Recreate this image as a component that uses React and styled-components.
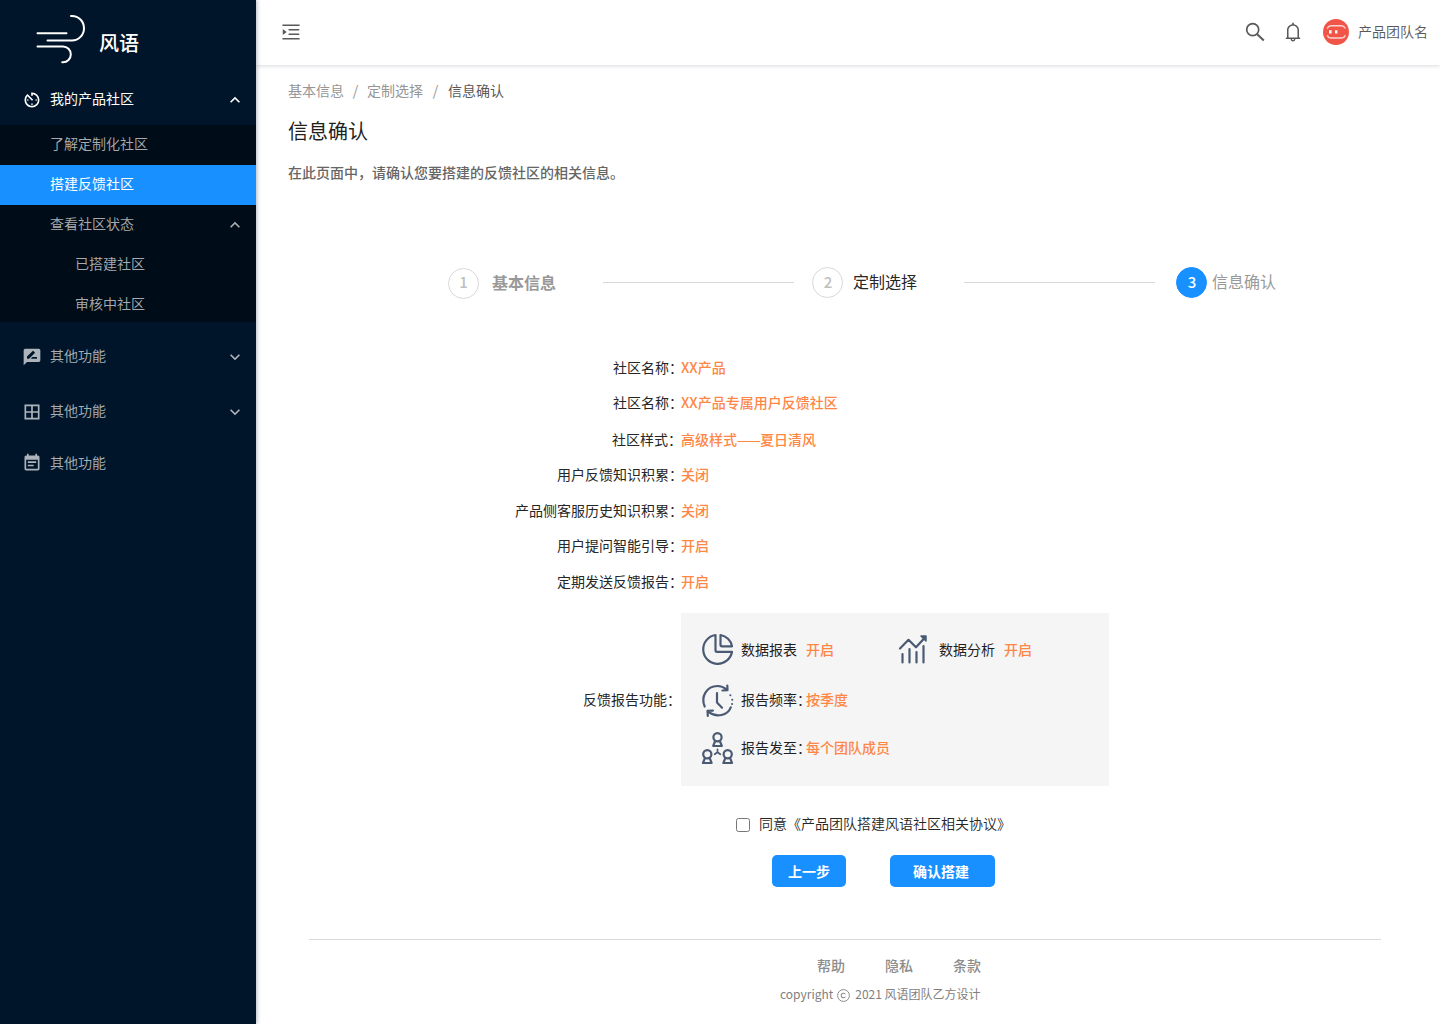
import React from "react";
import styled, { createGlobalStyle } from "styled-components";
import { MdAvTimer, MdRateReview, MdBorderAll, MdEventNote, MdExpandLess, MdExpandMore } from "react-icons/md";
import { AiOutlineMenuUnfold, AiOutlineBell } from "react-icons/ai";

const Global = createGlobalStyle`
  * { box-sizing: border-box; }
  body { margin: 0; background: #fff; font-family: "Noto Sans CJK SC", "Noto Sans", sans-serif; font-size: 14px; line-height: 20px; }
`;

const Page = styled.div`
  display: flex;
  width: 1440px;
  height: 1024px;
  overflow: hidden;
`;

const Sidebar = styled.aside`
  width: 256px;
  flex: none;
  background: #001529;
  box-shadow: 1px 0 4px rgba(0, 21, 41, 0.3);
  z-index: 1;
`;

const Brand = styled.div`
  display: flex;
  height: 75px;
  padding: 14px 0 0 36px;
  color: #fff;
`;

const BrandName = styled.h1`
  margin: 14px 0 0 11px;
  font-size: 20px;
  line-height: 30px;
  font-weight: 500;
`;

const MenuItem = styled.div`
  display: flex;
  align-items: center;
  height: ${(p) => p.$height || 40}px;
  padding: 0 11px 0 ${(p) => p.$indent || 22}px;
  color: ${(p) => (p.$active ? "#fff" : "rgba(255, 255, 255, 0.68)")};
  background: ${(p) => (p.$selected ? "#1890ff" : "transparent")};
  font-weight: ${(p) => (p.$active ? 400 : 350)};
  white-space: nowrap;
  > svg { flex: none; }
  > svg:first-child { margin-right: 8px; }
  > svg:last-child { margin-left: auto; }
`;

const MenuText = styled.span`
  margin-bottom: ${(p) => p.$lift || 4}px;
`;

const SubMenu = styled.div`
  height: 197px;
  overflow: hidden;
  background: #000c17;
`;

const Main = styled.main`
  flex: 1;
  display: flex;
  flex-direction: column;
`;

const TopBar = styled.header`
  display: flex;
  align-items: center;
  flex: none;
  height: 65px;
  padding: 0 12px 1px 24px;
  color: #595959;
  box-shadow: 0 1px 4px rgba(0, 21, 41, 0.16);
`;

const Tools = styled.div`
  display: flex;
  align-items: center;
  margin-left: auto;
`;

const Bell = styled(AiOutlineBell)`
  margin: 0 19px 0 16px;
`;

const UserName = styled.span`
  margin: 0 0 3px 9px;
  font-weight: 350;
`;

const Intro = styled.section`
  padding: 15px 32px 0;
  height: 202px;
`;

const Crumbs = styled.nav`
  display: flex;
  color: #969696;
`;

const Slash = styled.span`
  width: ${(p) => p.$width}px;
  text-align: center;
`;

const Current = styled.span`
  color: #595959;
`;

const Title = styled.h2`
  margin: 17px 0 0;
  font-size: 20px;
  line-height: 28px;
  font-weight: 400;
  color: #1f1f1f;
`;

const Description = styled.p`
  margin: 17px 0 0;
  color: #666;
  font-weight: 500;
`;

const Steps = styled.div`
  display: flex;
  align-items: center;
  height: 31px;
  padding-left: 192px;
`;

const StepCircle = styled.span`
  display: flex;
  align-items: center;
  justify-content: center;
  width: 31px;
  height: 31px;
  margin: ${(p) => p.$drop || 0}px ${(p) => p.$gap}px ${(p) => -(p.$drop || 0)}px 0;
  padding: 0 0 ${(p) => (p.$drop ? 4 : 1)}px ${(p) => (p.$drop ? 0 : 1)}px;
  border-radius: 50%;
  border: 1px solid ${(p) => (p.$current ? "#1890ff" : "#d9d9d9")};
  background: ${(p) => (p.$current ? "#1890ff" : "#fff")};
  color: ${(p) => (p.$current ? "#fff" : "#bfbfbf")};
  font-size: 15px;
  font-weight: 500;
`;

const StepLabel = styled.span`
  width: ${(p) => p.$width}px;
  padding-bottom: ${(p) => (p.$bold ? 2 : 4)}px;
  font-size: 16px;
  font-weight: ${(p) => (p.$bold ? 700 : 400)};
  color: ${(p) => (p.$dark ? "#262626" : "#999")};
`;

const StepLine = styled.span`
  width: 191px;
  height: 1px;
  margin-right: ${(p) => p.$gap}px;
  background: #d9d9d9;
`;

const Details = styled.section`
  padding-top: 59px;
`;

const DetailRow = styled.div`
  display: flex;
  height: ${(p) => p.$height}px;
`;

const DetailLabel = styled.span`
  display: flex;
  justify-content: flex-end;
  width: ${(p) => p.$width}px;
  margin-right: ${(p) => 425 - p.$width}px;
  padding-bottom: ${(p) => p.$lift || 0}px;
  color: #262626;
`;

const Value = styled.span`
  font-weight: 500;
  color: #ff8746;
  white-space: nowrap;
`;

const Dash = styled.span`
  letter-spacing: -0.5px;
`;

const ReportRow = styled.div`
  display: flex;
  align-items: center;
`;

const Report = styled.div`
  display: grid;
  grid-template-columns: 198px 1fr;
  grid-template-rows: 51px 50px 46px;
  width: 428px;
  height: 173px;
  padding: 11px 0 0 20px;
  background: #f5f5f5;
`;

const Feature = styled.div`
  display: flex;
  align-items: center;
  grid-column: ${(p) => p.$column || 1};
  color: #1f1f1f;
  > span { margin-bottom: 2px; }
`;

const FeatureName = styled.span`
  width: 65px;
  margin-left: 7px;
  white-space: nowrap;
  font-feature-settings: "halt";
`;

const Agreement = styled.label`
  display: flex;
  align-items: center;
  height: 20px;
  margin: 28px 0 0 480px;
  font-weight: 350;
  color: #262626;
`;

const AgreementText = styled.span`
  margin-bottom: 2px;
`;

const Checkbox = styled.input`
  width: 14px;
  height: 14px;
  margin: 2px 9px 0 0;
`;

const Actions = styled.div`
  display: flex;
  gap: 44px;
  margin: 21px 0 0 516px;
`;

const Button = styled.button`
  width: ${(p) => p.$width}px;
  height: 32px;
  padding: 0 ${(p) => p.$inset || 0}px 0 0;
  border: 0;
  border-radius: 5px;
  background: #1890ff;
  color: #fff;
  font: inherit;
  font-weight: 700;
`;

const Footer = styled.footer`
  margin: 52px 59px 0 53px;
  border-top: 1px solid #d9d9d9;
  color: #8c8c8c;
  font-weight: 500;
`;

const Links = styled.div`
  display: flex;
  gap: 40px;
  padding: 15px 0 0 508px;
`;

const Copyright = styled.div`
  display: flex;
  align-items: center;
  margin: 9px 0 0 471px;
  font-size: 12px;
  font-weight: 400;
  color: #808080;
  white-space: nowrap;
  svg { margin: 2px 5px 0 4px; }
`;

const WindLogo = () => (
  <svg width="52" height="50" viewBox="0 0 52 50" fill="none" stroke="#fff" strokeWidth="2" strokeLinecap="round">
    <path d="M1.500 19.300H30.500M11.500 26.500H36a12 12.300 0 0 0 0-24.600h-1" />
    <path d="M1.500 32.500H27a7.800 7.900 0 0 1 0 15.800h-.8" />
  </svg>
);

const SearchIcon = () => (
  <svg width="24" height="24" viewBox="0 0 24 24" fill="none" stroke="#595959" strokeWidth="1.700">
    <circle cx="10.700" cy="9.700" r="6" />
    <path d="M15.200 14.200l6.600 6.300" strokeWidth="2" />
  </svg>
);

const Avatar = () => (
  <svg width="26" height="26" viewBox="0 0 26 26">
    <circle cx="13" cy="13" r="13" fill="#f05548" />
    <g fill="none" stroke="#fff" strokeOpacity=".75" strokeWidth="1.500" strokeLinecap="round">
      <path d="M4.500 9c.8-1.600 1.800-2.300 3.500-2.300h10.500c1.700 0 2.700.7 3.500 2.300M4.500 16.800c.8 1.600 1.800 2.300 3.500 2.300h10.500c1.700 0 2.700-.7 3.500-2.300" />
    </g>
    <path d="M6 11.200h2.600v3.200H6zM12 11.200h2.400v3.200H12z" fill="#fff" />
  </svg>
);

const Line = ({ children }) => (
  <svg width="33" height="33" viewBox="0 0 33 33" overflow="visible" fill="none" stroke="#4a5a73" strokeWidth="2.200" strokeLinecap="round" strokeLinejoin="round">
    {children}
  </svg>
);

const PieIcon = () => (
  <Line>
    <path d="M14.500 2A14.500 14.500 0 1 0 31 18.800H16a1.500 1.500 0 0 1-1.500-1.500zM19.500 2v9.800a1.500 1.500 0 0 0 1.500 1.500h10A14 14 0 0 0 19.500 2z" />
  </Line>
);

const ChartIcon = () => (
  <Line>
    <path d="M3.500 21v8.500M10.500 16v13.500M17.500 19v10.500M24.500 13v16.500M1 15.500l8.500-8.700 7.500 7.500L26 4.500" />
    <path d="M22 3h5v5z" fill="#4a5a73" strokeWidth="1.500" />
  </Line>
);

const ClockIcon = () => (
  <Line>
    <path d="M3.700 22.500C-.5 13 5.500 2 16.500 2c3.800 0 6.500 1.300 8.700 3.300M26.300 1.500l.2 4.700-5 .3M7.800 28.200C15.500 34 26.500 31.500 29.800 23.300M6.800 32l-.3-5.200 5.400-.2M16 9v9.500l5 5.200" />
    <path d="M29.300 11.300h.1M31.200 15.700h.1M31 20h.1" strokeWidth="2" />
  </Line>
);

const TeamIcon = () => (
  <Line>
    <circle cx="16.500" cy="5.300" r="4.100" />
    <path d="M14 9.300l-1.800 4.700h8.600L19 9.300" />
    <circle cx="6.300" cy="22.300" r="4.100" />
    <path d="M3.800 26.300L2 31h8.600l-1.800-4.700" />
    <circle cx="26.700" cy="22.300" r="4.100" />
    <path d="M24.200 26.300L22.400 31H31l-1.800-4.700" />
    <path d="M16.500 17.300v3l-2.800 2M16.500 20.300l2.800 2" strokeWidth="1.700" />
  </Line>
);

const CopyrightMark = () => (
  <svg width="13" height="13" viewBox="0 0 13 13" fill="none" stroke="#8c8c8c">
    <circle cx="6.500" cy="6.500" r="5.900" />
    <path d="M8.400 5.200a2.300 2.300 0 1 0 0 2.600" strokeWidth="1.100" />
  </svg>
);

const details = [
  ["社区名称：", "XX产品", 35, 427],
  ["社区名称：", "XX产品专属用户反馈社区", 37, 427],
  ["社区样式：", <>高级样式<Dash>——</Dash>夏日清风</>, 35, 426],
  ["用户反馈知识积累：", "关闭", 36, 427],
  ["产品侧客服历史知识积累：", "关闭", 35, 427],
  ["用户提问智能引导：", "开启", 36, 427],
  ["定期发送反馈报告：", "开启", 42, 427],
];

export default function App() {
  return (
    <Page>
      <Global />
      <Sidebar>
        <Brand><WindLogo /><BrandName>风语</BrandName></Brand>
        <MenuItem $active $height={50}><MdAvTimer size={20} /><MenuText>我的产品社区</MenuText><MdExpandLess size={20} /></MenuItem>
        <SubMenu>
          <MenuItem $indent={50}><MenuText>了解定制化社区</MenuText></MenuItem>
          <MenuItem $indent={50} $active $selected><MenuText>搭建反馈社区</MenuText></MenuItem>
          <MenuItem $indent={50}><MenuText>查看社区状态</MenuText><MdExpandLess size={20} /></MenuItem>
          <MenuItem $indent={75}><MenuText>已搭建社区</MenuText></MenuItem>
          <MenuItem $indent={75}><MenuText>审核中社区</MenuText></MenuItem>
        </SubMenu>
        <MenuItem $height={69}><MdRateReview size={20} /><MenuText $lift={3}>其他功能</MenuText><MdExpandMore size={20} /></MenuItem>
        <MenuItem $height={41}><MdBorderAll size={20} /><MenuText $lift={3}>其他功能</MenuText><MdExpandMore size={20} /></MenuItem>
        <MenuItem $height={62}><MdEventNote size={20} /><MenuText $lift={2}>其他功能</MenuText></MenuItem>
      </Sidebar>
      <Main>
        <TopBar>
          <AiOutlineMenuUnfold size={22} />
          <Tools>
            <SearchIcon />
            <Bell size={22} />
            <Avatar />
            <UserName>产品团队名</UserName>
          </Tools>
        </TopBar>
        <Intro>
          <Crumbs>基本信息<Slash $width={23}>/</Slash>定制选择<Slash $width={25}>/</Slash><Current>信息确认</Current></Crumbs>
          <Title>信息确认</Title>
          <Description>在此页面中，请确认您要搭建的反馈社区的相关信息。</Description>
        </Intro>
        <Steps>
          <StepCircle $gap={13} $drop={1}>1</StepCircle>
          <StepLabel $width={111} $bold>基本信息</StepLabel>
          <StepLine $gap={18} />
          <StepCircle $gap={10}>2</StepCircle>
          <StepLabel $width={111} $dark>定制选择</StepLabel>
          <StepLine $gap={21} />
          <StepCircle $gap={5} $current>3</StepCircle>
          <StepLabel $width={64}>信息确认</StepLabel>
        </Steps>
        <Details>
          {details.map(([label, value, height, width]) => (
            <DetailRow key={label + height} $height={height}>
              <DetailLabel $width={width}>{label}</DetailLabel>
              <Value>{value}</Value>
            </DetailRow>
          ))}
          <ReportRow>
            <DetailLabel $width={425} $lift={2}>反馈报告功能：</DetailLabel>
            <Report>
              <Feature><PieIcon /><FeatureName>数据报表</FeatureName><Value>开启</Value></Feature>
              <Feature $column={2}><ChartIcon /><FeatureName>数据分析</FeatureName><Value>开启</Value></Feature>
              <Feature><ClockIcon /><FeatureName>报告频率：</FeatureName><Value>按季度</Value></Feature>
              <Feature><TeamIcon /><FeatureName>报告发至：</FeatureName><Value>每个团队成员</Value></Feature>
            </Report>
          </ReportRow>
        </Details>
        <Agreement><Checkbox type="checkbox" /><AgreementText>同意《产品团队搭建风语社区相关协议》</AgreementText></Agreement>
        <Actions>
          <Button $width={74}>上一步</Button>
          <Button $width={105} $inset={3}>确认搭建</Button>
        </Actions>
        <Footer>
          <Links><span>帮助</span><span>隐私</span><span>条款</span></Links>
          <Copyright>copyright<CopyrightMark />2021 风语团队乙方设计</Copyright>
        </Footer>
      </Main>
    </Page>
  );
}
